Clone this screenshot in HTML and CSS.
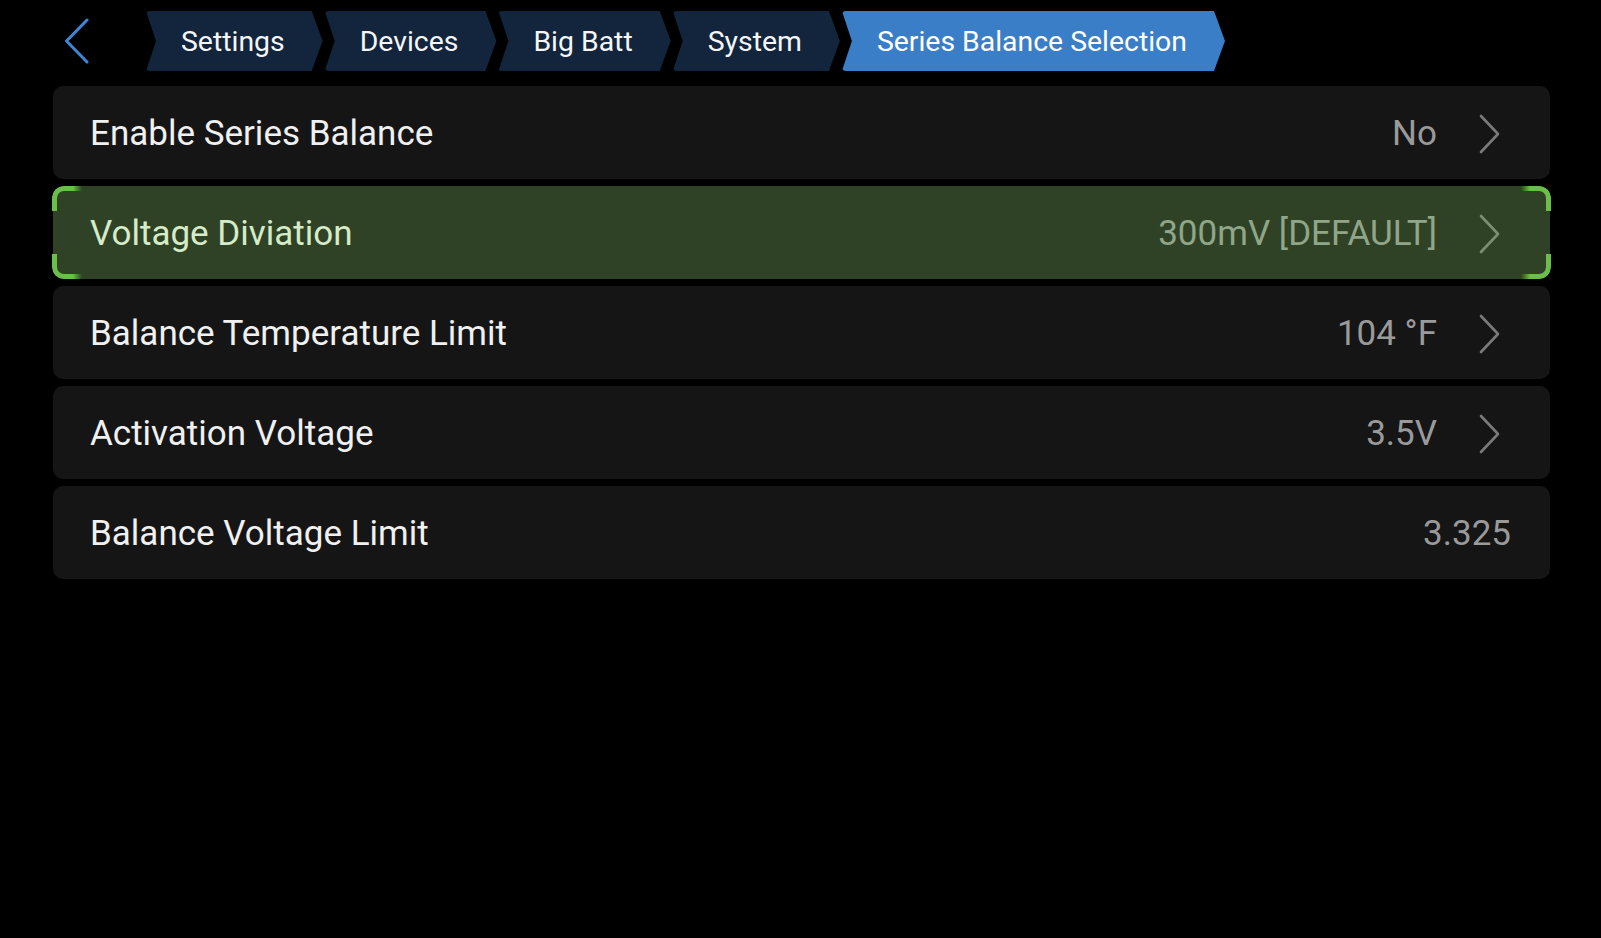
FILE: index.html
```html
<!DOCTYPE html>
<html lang="en">
<head>
<meta charset="utf-8">
<title>Series Balance Selection</title>
<link rel="stylesheet" href="styles.css">
</head>
<body>
<div class="page">
  <header class="topbar">
    <div class="back">
      <svg class="back-icon" width="26" height="46" viewBox="0 0 26 46"><polyline points="23,2 2.5,23 23,44" fill="none" stroke="#3d86d6" stroke-width="3" stroke-linecap="round" stroke-linejoin="round"/></svg>
    </div>
    <nav class="crumbs">
      <div class="crumb">Settings</div>
      <div class="crumb">Devices</div>
      <div class="crumb">Big Batt</div>
      <div class="crumb">System</div>
      <div class="crumb active">Series Balance Selection</div>
    </nav>
  </header>
  <main class="list">
    <div class="row">
      <span class="title">Enable Series Balance</span>
      <span class="value">No</span>
      <svg class="chev" width="22" height="40" viewBox="0 0 22 40"><polyline points="2,2 19,20 2,38" fill="none" stroke="currentColor" stroke-width="2.6" stroke-linecap="round" stroke-linejoin="round"/></svg>
    </div>
    <div class="row selected">
      <span class="corner tl"></span><span class="corner tr"></span><span class="corner bl"></span><span class="corner br"></span>
      <span class="title">Voltage Diviation</span>
      <span class="value">300mV [DEFAULT]</span>
      <svg class="chev" width="22" height="40" viewBox="0 0 22 40"><polyline points="2,2 19,20 2,38" fill="none" stroke="currentColor" stroke-width="2.6" stroke-linecap="round" stroke-linejoin="round"/></svg>
    </div>
    <div class="row">
      <span class="title">Balance Temperature Limit</span>
      <span class="value">104 °F</span>
      <svg class="chev" width="22" height="40" viewBox="0 0 22 40"><polyline points="2,2 19,20 2,38" fill="none" stroke="currentColor" stroke-width="2.6" stroke-linecap="round" stroke-linejoin="round"/></svg>
    </div>
    <div class="row">
      <span class="title">Activation Voltage</span>
      <span class="value">3.5V</span>
      <svg class="chev" width="22" height="40" viewBox="0 0 22 40"><polyline points="2,2 19,20 2,38" fill="none" stroke="currentColor" stroke-width="2.6" stroke-linecap="round" stroke-linejoin="round"/></svg>
    </div>
    <div class="row">
      <span class="title">Balance Voltage Limit</span>
      <span class="value last">3.325</span>
    </div>
  </main>
</div>
</body>
</html>
```
FILE: styles.css
```css
* { box-sizing: border-box; }
html, body {
  margin: 0;
  background: #000;
  height: 100%;
}
body {
  font-family: Roboto, "Noto Sans", "Liberation Sans", sans-serif;
  color: #f2f2f2;
}
.page {
  padding: 11px 51px 0 53px;
}
.topbar {
  display: flex;
  align-items: center;
  height: 60px;
}
.back {
  width: 93px;
  height: 60px;
  display: flex;
  align-items: center;
  padding-left: 11px;
}
.back-icon { display: block; }
.crumbs {
  display: flex;
  gap: 2px;
  height: 60px;
}
.crumb {
  height: 60px;
  display: flex;
  align-items: center;
  padding: 0 38px 0 35px;
  background: #12253c;
  color: #f4f6f8;
  font-size: 28.4px;
  clip-path: polygon(0 0, calc(100% - 11px) 0, 100% 50%, calc(100% - 11px) 100%, 0 100%, 10px 50%);
  border-radius: 4px;
}
.crumb.active {
  background: #3b7ec8;
  color: #fff;
}
.list {
  margin-top: 15px;
  display: flex;
  flex-direction: column;
  gap: 7px;
}
.row {
  position: relative;
  height: 93px;
  display: flex;
  align-items: center;
  background: #151515;
  border-radius: 10px;
  padding: 2px 38px 0 37px;
  font-size: 35px;
}
.title {
  flex: 1;
  color: #f0f0f0;
}
.value {
  color: #9a9a9a;
  margin-right: 42px;
}
.value.last { margin-right: 1px; }
.chev {
  color: #7a7a7a;
  margin-right: 11px;
  display: block;
}
.row.selected {
  background: #2f4225;
}
.row.selected .title { color: #d6ebc7; }
.row.selected .value { color: #91a688; }
.row.selected .chev { color: #7b9070; }
.corner {
  position: absolute;
  width: 30px;
  height: 25px;
  border-color: #6cbe4b;
  border-style: solid;
  border-width: 0;
}
.corner.tl {
  top: 0; left: -1px;
  border-top-width: 5px; border-left-width: 5px;
  border-top-left-radius: 12px;
  -webkit-mask-image: linear-gradient(to right, #000 70%, transparent 100%);
  mask-image: linear-gradient(to right, #000 70%, transparent 100%);
}
.corner.bl {
  bottom: 0; left: -1px;
  border-bottom-width: 5px; border-left-width: 5px;
  border-bottom-left-radius: 12px;
  -webkit-mask-image: linear-gradient(to right, #000 70%, transparent 100%);
  mask-image: linear-gradient(to right, #000 70%, transparent 100%);
}
.corner.tr {
  top: 0; right: -1px;
  border-top-width: 5px; border-right-width: 5px;
  border-top-right-radius: 12px;
  -webkit-mask-image: linear-gradient(to left, #000 70%, transparent 100%);
  mask-image: linear-gradient(to left, #000 70%, transparent 100%);
}
.corner.br {
  bottom: 0; right: -1px;
  border-bottom-width: 5px; border-right-width: 5px;
  border-bottom-right-radius: 12px;
  -webkit-mask-image: linear-gradient(to left, #000 70%, transparent 100%);
  mask-image: linear-gradient(to left, #000 70%, transparent 100%);
}
```
